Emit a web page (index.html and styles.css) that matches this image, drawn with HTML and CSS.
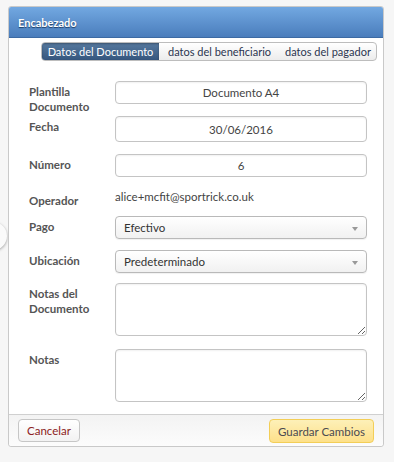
FILE: index.html
```html
<!DOCTYPE html>
<html lang="es">
<head>
    <meta charset="UTF-8">
    <meta name="viewport" content="width=device-width, initial-scale=1.0">
    <title>Encabezado</title>
    <link rel="stylesheet" href="styles.css">
</head>
<body>

    <!-- Carousel arrow peeking from behind the panel -->
    <div class="side-knob"></div>

    <div class="panel">
        <div class="panel-heading">Encabezado</div>

        <div class="panel-body">
            <!-- Tabs -->
            <div class="tabs">
                <span class="tab active">Datos del Documento</span>
                <span class="tab">datos del beneficiario</span>
                <span class="tab">datos del pagador</span>
            </div>

            <!-- Form -->
            <div class="form">
                <div class="row row-plantilla">
                    <label>Plantilla Documento</label>
                    <input type="text" class="field centered" value="Documento A4">
                </div>
                <div class="row row-fecha">
                    <label>Fecha</label>
                    <input type="text" class="field field-tall centered" value="30/06/2016">
                </div>
                <div class="row row-numero">
                    <label>Número</label>
                    <input type="text" class="field centered" value="6">
                </div>
                <div class="row row-operador">
                    <label>Operador</label>
                    <span class="static">alice+mcfit@sportrick.co.uk</span>
                </div>
                <div class="row row-pago">
                    <label>Pago</label>
                    <div class="select">Efectivo<span class="caret"></span></div>
                </div>
                <div class="row row-ubicacion">
                    <label>Ubicación</label>
                    <div class="select">Predeterminado<span class="caret"></span></div>
                </div>
                <div class="row row-notas-doc">
                    <label>Notas del Documento</label>
                    <textarea class="field area"></textarea>
                </div>
                <div class="row row-notas">
                    <label>Notas</label>
                    <textarea class="field area"></textarea>
                </div>
            </div>
        </div>

        <div class="panel-footer">
            <button class="btn btn-cancel">Cancelar</button>
            <button class="btn btn-save">Guardar Cambios</button>
        </div>
    </div>

</body>
</html>
```

FILE: styles.css
```css
/* General Styles */
body {
    margin: 0;
    padding: 6px 10px 0 8px;
    background: #f6f6f6;
    font-family: 'Lato', 'Open Sans', sans-serif;
    font-size: 11.5px;
    color: #444;
    position: relative;
}

.side-knob {
    position: absolute;
    left: -21px;
    top: 222px;
    width: 28px;
    height: 28px;
    border-radius: 50%;
    background: #fafafa;
    box-shadow: 0 1px 3px rgba(0, 0, 0, 0.35);
}

.panel {
    position: relative;
    width: 374px;
    border: 1px solid #c9c9c9;
    border-radius: 3px;
    background: #fff;
}

.panel-heading {
    height: 30px;
    line-height: 31px;
    padding-left: 9px;
    background: linear-gradient(#72a8e1, #4a7dbc);
    border-bottom: 1px solid #3c6aa3;
    border-radius: 2px 2px 0 0;
    color: #fff;
    font-weight: bold;
    font-size: 11px;
    text-shadow: 0 1px 1px #1c3d66;
}

/* Tabs */
.tabs {
    display: flex;
    margin: 4px 6px 0 32px;
    border: 1px solid #bdbdbd;
    border-radius: 4px;
    overflow: hidden;
    height: 17px;
    background: linear-gradient(#ffffff, #ececec);
    font-size: 11px;
}

.tab {
    line-height: 17px;
    padding-left: 9px;
    color: #2c3550;
    white-space: nowrap;
    box-sizing: border-box;
}

.tab:nth-child(2) {
    width: 117px;
}

.tab:nth-child(3) {
    flex: 1;
}

.tab.active {
    width: 117px;
    padding: 0;
    text-align: center;
    background: linear-gradient(#56799f, #35567e);
    color: #fff;
    box-shadow: inset 0 1px 2px rgba(0, 0, 0, 0.3);
}

/* Form */
.form {
    padding: 20px 16px 12px 20px;
}

.row {
    display: flex;
    align-items: flex-start;
}

.row label {
    width: 86px;
    flex-shrink: 0;
    font-weight: bold;
    color: #555;
    line-height: 15px;
    padding: 3px 8px 0 0;
    box-sizing: border-box;
}

.field {
    flex: 1;
    height: 23px;
    box-sizing: border-box;
    border: 1px solid #c4c4c4;
    border-radius: 4px;
    font-family: inherit;
    font-size: 11.5px;
    color: #444;
    padding: 0 6px;
    margin: 0;
    box-shadow: inset 0 1px 2px rgba(0, 0, 0, 0.06);
}

.field-tall {
    height: 26px;
}

.centered {
    text-align: center;
}

.area {
    height: 53px;
    resize: vertical;
}

.static {
    color: #444;
    line-height: 15px;
    padding-top: 1px;
}

.select {
    flex: 1;
    height: 23px;
    line-height: 22px;
    box-sizing: border-box;
    border: 1px solid #b9b9b9;
    border-radius: 4px;
    padding: 0 8px;
    background: linear-gradient(#ffffff, #f1f1f1);
    color: #333;
    position: relative;
    box-shadow: 0 1px 1px rgba(0, 0, 0, 0.06);
}

.caret {
    position: absolute;
    right: 8px;
    top: 10px;
    border-left: 3px solid transparent;
    border-right: 3px solid transparent;
    border-top: 4px solid #999;
}

.row-fecha { margin-top: 2px; }
.row-numero { margin-top: 12px; }
.row-operador { margin-top: 11px; }
.row-operador label { padding-top: 5px; }
.row-pago { margin-top: 8px; }
.row-ubicacion { margin-top: 11px; }
.row-notas-doc { margin-top: 10px; }
.row-notas { margin-top: 13px; }

/* Footer */
.panel-footer {
    display: flex;
    justify-content: space-between;
    align-items: flex-start;
    padding: 4px 9px;
    height: 32px;
    box-sizing: border-box;
    border-top: 1px solid #d0d0d0;
    background: linear-gradient(#f3f3f3, #fcfcfc);
    border-radius: 0 0 3px 3px;
}

.btn {
    font-family: inherit;
    font-size: 11.5px;
    height: 23px;
    border-radius: 4px;
    cursor: pointer;
    padding: 0 6px;
}

.btn-cancel {
    width: 62px;
    background: linear-gradient(#ffffff, #f2f2f2);
    border: 1px solid #c6c6c6;
    color: #8c2222;
}

.btn-save {
    width: 105px;
    height: 24px;
    background: linear-gradient(#fdf0b8, #fde08a);
    border: 1px solid #f3ce57;
    color: #4a4a50;
}
```
